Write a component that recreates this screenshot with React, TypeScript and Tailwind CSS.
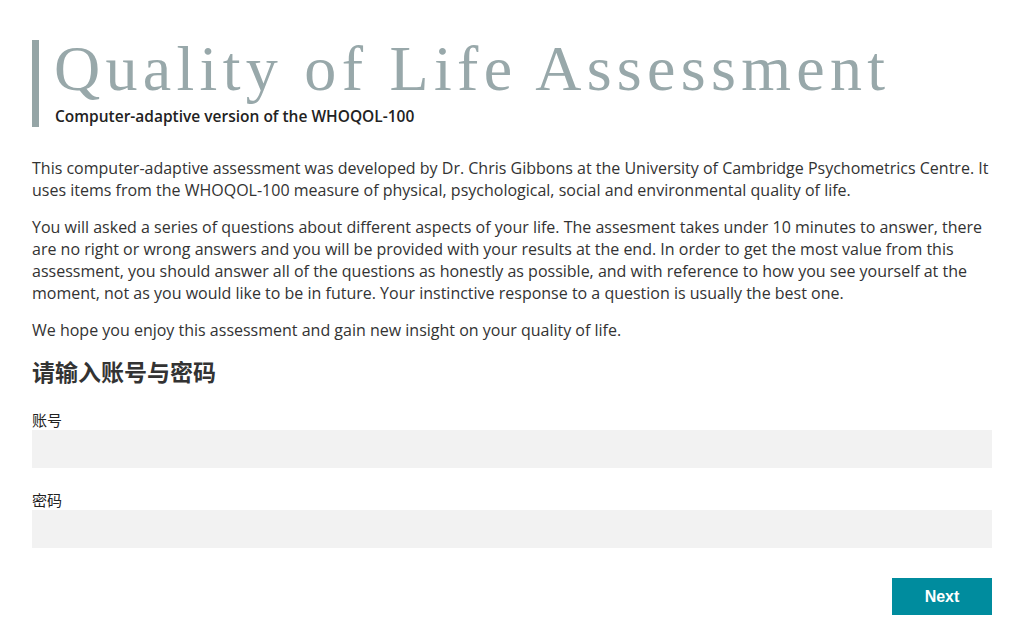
export default function App() {
  const paragraphs = [
    "This computer-adaptive assessment was developed by Dr. Chris Gibbons at the University of Cambridge Psychometrics Centre. It uses items from the WHOQOL-100 measure of physical, psychological, social and environmental quality of life.",
    "You will asked a series of questions about different aspects of your life. The assesment takes under 10 minutes to answer, there are no right or wrong answers and you will be provided with your results at the end. In order to get the most value from this assessment, you should answer all of the questions as honestly as possible, and with reference to how you see yourself at the moment, not as you would like to be in future. Your instinctive response to a question is usually the best one.",
    "We hope you enjoy this assessment and gain new insight on your quality of life.",
  ];

  return (
    <div className="min-h-screen bg-white font-['Open_Sans','Noto_Sans_CJK_SC',sans-serif] text-[#333333]">
      <div className="ml-[32px] w-[960px] pt-[40px]">
        <div className="border-l-[7px] border-[#95a5a6] pl-[15px] h-[87px]">
          <h1 className="font-['Liberation_Serif',serif] text-[64px] leading-[58px] tracking-[5.3px] text-[#98a8aa] whitespace-nowrap">
            Quality of Life Assessment
          </h1>
          <p className="mt-[7px] pl-[1px] text-[15.5px] leading-[22px] font-semibold text-[#222]">
            Computer-adaptive version of the WHOQOL-100
          </p>
        </div>

        <div className="mt-[30px] space-y-[15px] text-[16px] leading-[22px]">
          {paragraphs.map((p) => (
            <p key={p.slice(0, 12)}>{p}</p>
          ))}
        </div>

        <h2 className="mt-[15px] text-[23px] leading-[30px] font-bold font-['Noto_Sans_CJK_SC',sans-serif] text-[#333]">
          请输入账号与密码
        </h2>

        <div className="mt-[24px]">
          <label className="block text-[15px] leading-[20px] font-['Noto_Sans_CJK_SC',sans-serif] text-[#222]">
            账号
          </label>
          <input type="text" className="block w-full h-[38px] bg-[#f2f2f2] outline-none px-3" />
        </div>

        <div className="mt-[22px]">
          <label className="block text-[15px] leading-[20px] font-['Noto_Sans_CJK_SC',sans-serif] text-[#222]">
            密码
          </label>
          <input type="password" className="block w-full h-[38px] bg-[#f2f2f2] outline-none px-3" />
        </div>

        <div className="mt-[30px] flex justify-end">
          <button className="w-[100px] h-[37px] bg-[#008c9e] text-white text-[16px] font-['Liberation_Sans',sans-serif] font-semibold">
            Next
          </button>
        </div>
      </div>
    </div>
  );
}
